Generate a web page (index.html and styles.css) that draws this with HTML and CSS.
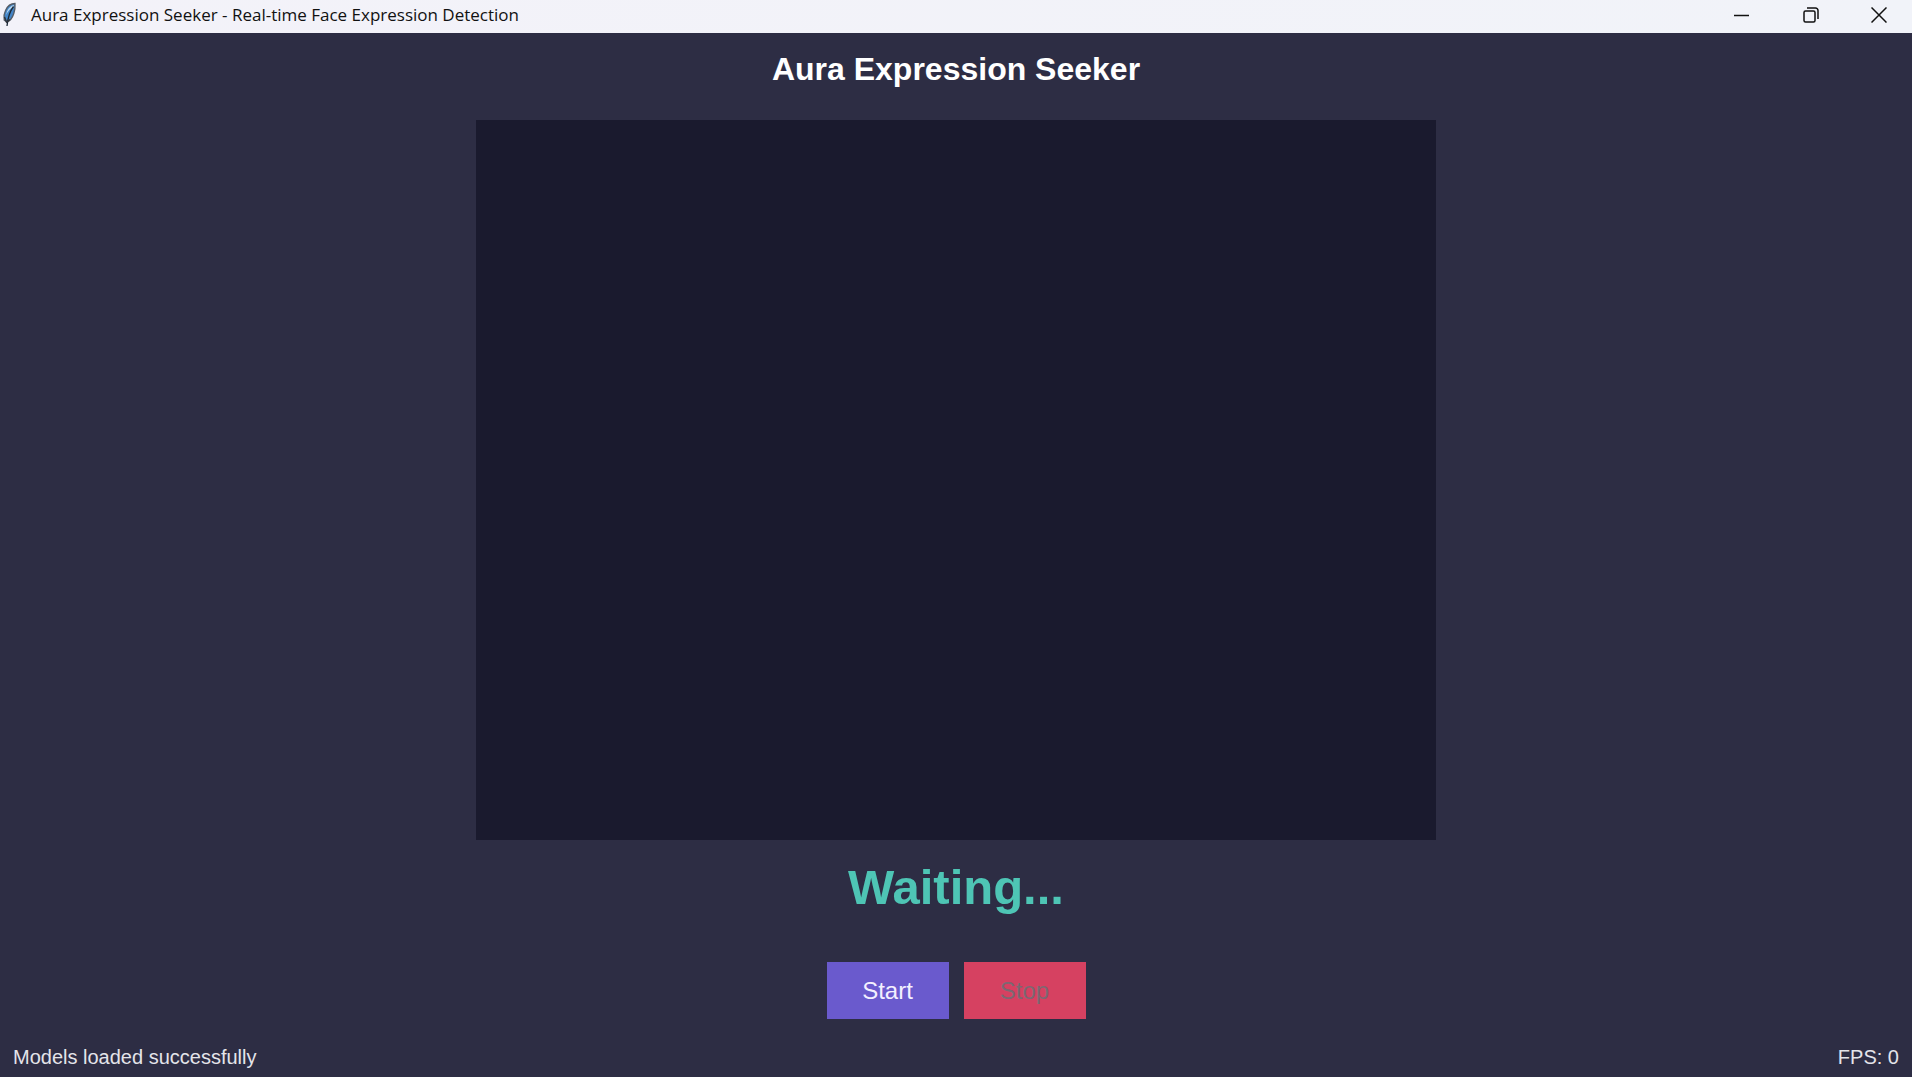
FILE: index.html
```html
<!DOCTYPE html>
<html lang="en">
<head>
<meta charset="utf-8">
<title>Aura Expression Seeker - Real-time Face Expression Detection</title>
<link rel="stylesheet" href="styles.css">
</head>
<body>
<header class="titlebar">
  <svg class="feather" width="18" height="28" viewBox="0 0 18 28" aria-hidden="true">
    <path d="M15 2.500C11 2.500 7.500 5 5.500 9.500c-1.500 3-2 6-1.300 9.500l2.800 2c3-1 5.500-4.500 6.800-8.500 1-3.200 1.500-6.500 1.200-10z" fill="#4385c8" stroke="#555c66" stroke-width="1.300"/>
    <path d="M14 4c-3 .5-5.500 3-7 6.500L6 14c2-4 4.500-6.500 7.500-8z" fill="#b5d5ee"/>
    <path d="M13.500 5.500C10 10 8 15 7 25" fill="none" stroke="#1b2836" stroke-width="1.300"/>
    <path d="M4.500 16l2 5 3.500-2.500" fill="none" stroke="#30343c" stroke-width="1.500"/>
  </svg>
  <span class="window-title">Aura Expression Seeker - Real-time Face Expression Detection</span>
  <button class="window-button" aria-label="Minimize"><svg width="16" height="16" viewBox="0 0 16 16"><path d="M1 8.500h15"/></svg></button>
  <button class="window-button" aria-label="Restore"><svg width="16" height="16" viewBox="0 0 16 16"><rect x="1" y="4" width="11" height="11" rx="1.500"/><path d="M4 1h8.500a2.500 2.500 0 0 1 2.500 2.500V12"/></svg></button>
  <button class="window-button" aria-label="Close"><svg width="16" height="16" viewBox="0 0 16 16"><path d="M.5.5l15 15M15.500.5l-15 15"/></svg></button>
</header>
<main class="content">
  <h1 class="heading">Aura Expression Seeker</h1>
  <div class="video"></div>
  <p class="expression">Waiting...</p>
  <div class="controls">
    <button class="control start">Start</button>
    <button class="control stop" disabled>Stop</button>
  </div>
</main>
<footer class="status">
  <span>Models loaded successfully</span>
  <span>FPS: 0</span>
</footer>
</body>
</html>
```
FILE: styles.css
```css
* { box-sizing: border-box; }
body {
  margin: 0;
  min-height: 100vh;
  display: flex;
  flex-direction: column;
  background: #2d2d44;
  color: #fff;
  font-family: "Liberation Sans", Arial, sans-serif;
}
.titlebar {
  display: flex;
  align-items: center;
  height: 33px;
  padding-bottom: 3px;
  background: linear-gradient(90deg, #f3f2f9, #f1f3f9);
  color: #111;
}
.feather { flex: none; }
.window-title {
  flex: 1;
  margin-left: 13px;
  font: 17px/30px "Open Sans", "Noto Sans", sans-serif;
}
.window-button {
  display: flex;
  align-items: center;
  justify-content: center;
  width: 70px;
  height: 30px;
  padding: 0;
  border: 0;
  background: none;
}
.window-button:last-child { width: 66px; }
.window-button svg {
  fill: none;
  stroke: #111;
  stroke-width: 1.500;
}
.content {
  flex: 1;
  display: flex;
  flex-direction: column;
  align-items: center;
}
.heading {
  margin: 16px 0 31px;
  font-size: 32px;
  line-height: 40px;
}
.video {
  width: 960px;
  max-width: 100%;
  height: 720px;
  background: #1a1a2e;
}
.expression {
  margin: 17px 0 45px;
  color: #4ec5b5;
  font-size: 49px;
  font-weight: bold;
  line-height: 60px;
}
.controls { display: flex; gap: 15px; }
.control {
  width: 122px;
  height: 57px;
  padding: 0;
  border: 0;
  color: #f3f0ff;
  font: 24px/32px "Liberation Sans", Arial, sans-serif;
}
.start { background: #6a5acd; }
.stop { background: #d64161; color: #7c6872; }
.status {
  display: flex;
  justify-content: space-between;
  padding: 0 13px 8px;
  color: #e4e4ea;
  font-size: 20px;
  line-height: 24px;
}
```
